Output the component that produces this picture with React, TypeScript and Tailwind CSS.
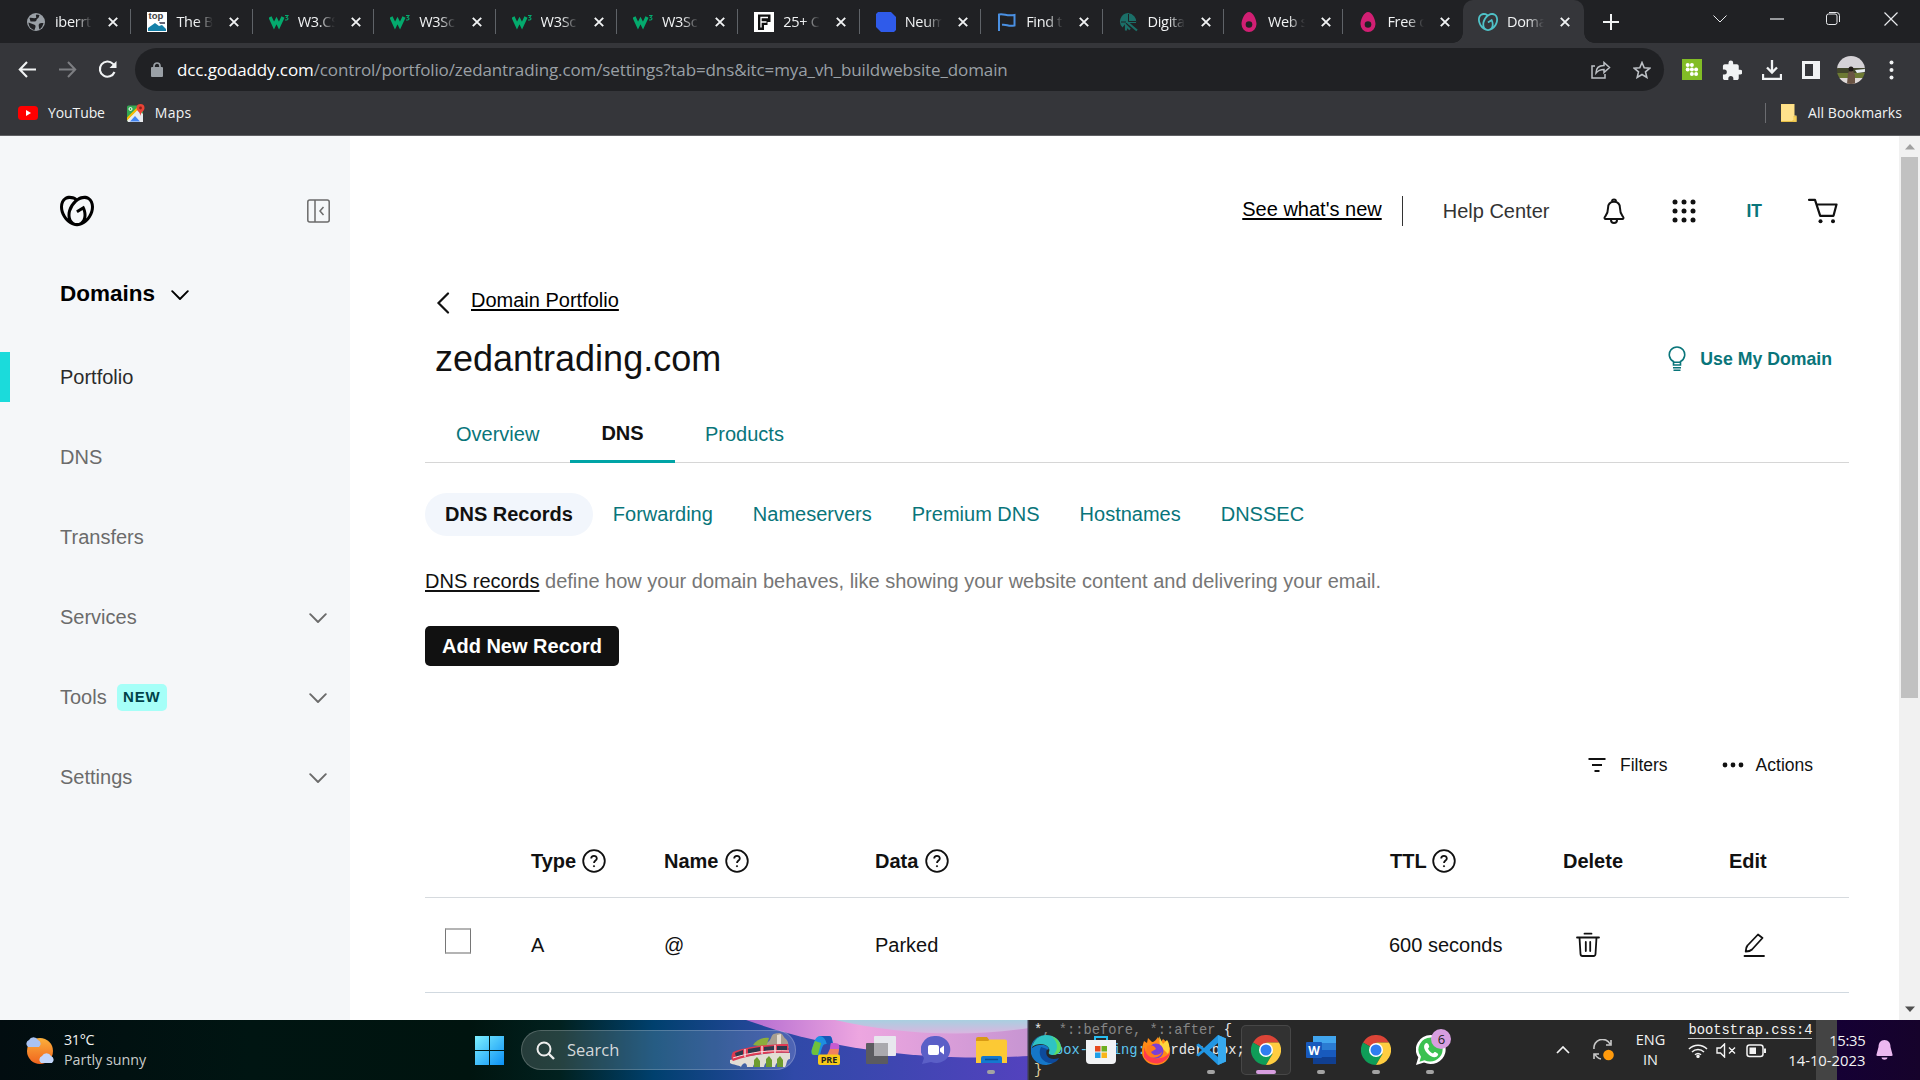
import React from "react";
import { SiGodaddy } from "react-icons/si";

const ui = "font-['Open_Sans','Noto_Sans',sans-serif]";

function Globe() {
  return (
    <svg width="20" height="20" viewBox="0 0 20 20">
      <circle cx="10" cy="10" r="9" fill="#9aa0a6" />
      <path d="M3.500 6c2-.5 4 .5 6.500 0 1-1-1-2.500.5-3.500l3 .5c-.5 2-1 3-2.500 4-1 1 0 2-2 2.500H4.500zM2.500 10.500l4 1.500c2 .5 3.500 1 3 3l-1 3C5 17.500 2.500 14 2.500 10.500zM13 16c0-2-1-3 .5-4.500 1-1 3-.5 4-.5-.3 2.500-2 5-4 6.500z" fill="#202124" />
    </svg>
  );
}
function TopSeo() {
  return (
    <svg width="20" height="20" viewBox="0 0 20 20">
      <rect width="20" height="20" fill="#fff" />
      <text x="1.500" y="7" fontSize="9.500" fontWeight="700" fontFamily="Liberation Sans" fill="#444">top</text>
      <path d="M1 19v-3l7-5 4 3 3-1 4 4v2z" fill="#1580a8" />
      <path d="M12 10h6v2h-5z" fill="#667" />
    </svg>
  );
}
function W3() {
  return (
    <svg width="20" height="20" viewBox="0 0 20 20">
      <path d="M1 5l4 8.500 2.500-5 2.500 5 4-8.500" fill="none" stroke="#04aa6d" strokeWidth="3.400" />
      <path d="M16 3.500h3l-1.500 2c2 0 2 2.500 0 2.500h-1.500" fill="none" stroke="#04aa6d" strokeWidth="1.100" />
    </svg>
  );
}
function FBox() {
  return (
    <svg width="20" height="20" viewBox="0 0 20 20">
      <rect width="20" height="20" fill="#fff" />
      <path d="M4 2.500h12.500v7.500h-3v3H10v5H4z" fill="#111" />
      <path d="M7 15.500V5.500h7M7.500 10h5" fill="none" stroke="#fff" strokeWidth="1.300" />
    </svg>
  );
}
function BlueShape() {
  return (
    <svg width="20" height="20" viewBox="0 0 20 20">
      <path d="M2 0h13l5 5v13l-2 2H5l-5-5V2z" fill="#2f5bea" />
    </svg>
  );
}
function Flag() {
  return (
    <svg width="20" height="20" viewBox="0 0 20 20">
      <path d="M2 19V2.500c6-1 7 2 15.500.5v10.500c-7 1.500-7-1.500-12.500-.7" fill="none" stroke="#4a90e2" strokeWidth="2" />
    </svg>
  );
}
function Circuit() {
  return (
    <svg width="20" height="20" viewBox="0 0 20 20">
      <path d="M9 1a8.500 8.500 0 0 0-5.500 14.500L7 11h10A8.500 8.500 0 0 0 9 1z" fill="#1b6f68" />
      <path d="M8 10l10 8.500M11 17.500L7 13.500v5" fill="none" stroke="#1b6f68" strokeWidth="2.200" />
      <path d="M9.500 2v7.500h7.500M2 10h5" fill="none" stroke="#202124" strokeWidth="1" />
    </svg>
  );
}
function Egg() {
  return (
    <svg width="20" height="20" viewBox="0 0 20 20">
      <path d="M10 0c4 0 7.500 7.500 7.500 12A7.500 8 0 0 1 2.500 12C2.500 7.500 6 0 10 0z" fill="#d11f73" />
      <circle cx="10" cy="12.500" r="3.300" fill="#202124" />
    </svg>
  );
}

const tabs: { icon: React.ReactNode; t: string }[] = [
  { icon: <Globe />, t: "iberrt" },
  { icon: <TopSeo />, t: "The B" },
  { icon: <W3 />, t: "W3.CS" },
  { icon: <W3 />, t: "W3Sc" },
  { icon: <W3 />, t: "W3Sc" },
  { icon: <W3 />, t: "W3Sc" },
  { icon: <FBox />, t: "25+ C" },
  { icon: <BlueShape />, t: "Neum" },
  { icon: <Flag />, t: "Find t" },
  { icon: <Circuit />, t: "Digita" },
  { icon: <Egg />, t: "Web s" },
  { icon: <Egg />, t: "Free o" },
  { icon: <SiGodaddy size={20} color="#4fc3c9" />, t: "Doma" },
];

function CloseX() {
  return (
    <svg width="10" height="10" viewBox="0 0 10 10" className="shrink-0">
      <path d="M.8.8l8.400 8.400M9.200.8L.8 9.200" stroke="#f1f3f4" strokeWidth="1.900" />
    </svg>
  );
}

function TabStrip() {
  return (
    <div className="flex h-[43px] bg-[#202124] pl-[10px]">
      {tabs.map((tab, i) => {
        const active = i === tabs.length - 1;
        return (
          <div
            key={i}
            className={
              "relative flex h-[43px] shrink-0 items-center " +
              (i < 10 ? "w-[121.400px] pl-[16px] " : "pl-[15px] ") +
              (i >= 10 && !active ? "w-[119.500px] " : "") +
              (active ? "w-[121px] rounded-t-[10px] bg-[#35363a]" : "")
            }
          >
            {active && (
              <>
                <div className="absolute -left-[10px] bottom-0 h-[10px] w-[10px] bg-[radial-gradient(circle_at_0_0,#202124_9.500px,#35363a_10px)]" />
                <div className="absolute -right-[10px] bottom-0 h-[10px] w-[10px] bg-[radial-gradient(circle_at_100%_0,#202124_9.500px,#35363a_10px)]" />
              </>
            )}
            <span className="flex w-5 shrink-0 justify-center">{tab.icon}</span>
            <span className="ml-[9px] mr-[16px] w-[37px] shrink-0 overflow-hidden whitespace-nowrap text-[14.500px] leading-5 tracking-[-0.3px] text-[#f1f3f4] [mask-image:linear-gradient(to_right,black_55%,transparent_100%)]">
              {tab.t}
            </span>
            <CloseX />
            {i < 11 && <span className="absolute right-0 top-[9px] h-[25px] w-px bg-[#5f6368]" />}
          </div>
        );
      })}
      <div className="flex flex-1 items-center pl-[19px]">
        <svg width="16" height="16" viewBox="0 0 16 16"><path d="M8 0v16M0 8h16" stroke="#f1f3f4" strokeWidth="2" /></svg>
      </div>
      <div className="flex h-[37px] items-center text-[#e8eaed]">
        <svg className="mr-[43px]" width="14" height="8" viewBox="0 0 14 8"><path d="M.5.500L7 7 13.500.500" fill="none" stroke="currentColor" /></svg>
        <svg className="mr-[42px]" width="14" height="2" viewBox="0 0 14 2"><path d="M0 1h14" stroke="currentColor" strokeWidth="1.200" /></svg>
        <svg className="mr-[44px]" width="14" height="13" viewBox="0 0 14 13"><rect x=".5" y="2" width="10.500" height="10.500" rx="2" fill="none" stroke="currentColor" /><path d="M3 .5h7.500a3 3 0 0 1 3 3V10" fill="none" stroke="currentColor" /></svg>
        <svg className="mr-[22px]" width="14" height="14" viewBox="0 0 14 14"><path d="M.5.500l13 13M13.500.500l-13 13" stroke="currentColor" strokeWidth="1.200" /></svg>
      </div>
    </div>
  );
}

function Toolbar() {
  return (
    <div className="flex h-[53px] items-center bg-[#35363a] text-[#f1f3f4]">
      <svg className="ml-[18px]" width="19" height="17" viewBox="0 0 19 17"><path d="M9 1L1.800 8.500 9 16M2 8.500h16" fill="none" stroke="currentColor" strokeWidth="2.100" /></svg>
      <svg className="ml-[22px] text-[#7d7e82]" width="18" height="17" viewBox="0 0 18 17"><path d="M9 1l7.200 7.500L9 16M16 8.500H0" fill="none" stroke="currentColor" strokeWidth="2" /></svg>
      <svg className="ml-[21px]" width="20" height="19" viewBox="0 0 20 19"><path d="M16.500 12A7.600 7.600 0 1 1 15 3.900l2 2.300" fill="none" stroke="currentColor" strokeWidth="2.100" /><path d="M18.500 1v7h-7z" fill="currentColor" /></svg>
      <div className="ml-[17px] flex h-[43px] w-[1529px] items-center rounded-full bg-[#202124]">
        <svg className="ml-[16px]" width="12" height="15" viewBox="0 0 12 15"><rect y="5" width="12" height="10" rx="1" fill="#9aa0a6" /><path d="M3 6V4a3 3 0 0 1 6 0v2" fill="none" stroke="#9aa0a6" strokeWidth="1.700" /></svg>
        <span className="ml-[14px] flex-1 whitespace-nowrap text-[17px] tracking-[-0.115px] text-[#9aa0a6]">
          <span className="text-white">dcc.godaddy.com</span>/control/portfolio/zedantrading.com/settings?tab=dns&amp;itc=mya_vh_buildwebsite_domain
        </span>
        <svg className="mr-[22px]" width="20" height="18" viewBox="0 0 20 18"><path d="M4 5H1v12h13v-4M5 12c0-5 3-7.500 8-7.500V1.500l5.500 5L13 11.500V8.500c-4 0-6 1-8 3.500z" fill="none" stroke="#bdc1c6" strokeWidth="1.500" /></svg>
        <svg className="mr-[13px]" width="18" height="18" viewBox="0 0 18 18"><path d="M9 1.500l2.200 5.200 5.600.5-4.300 3.700 1.300 5.500L9 13.500l-4.800 2.900 1.300-5.500L1.200 7.200l5.600-.5z" fill="none" stroke="#bdc1c6" strokeWidth="1.600" /></svg>
      </div>
      <svg className="ml-[18px]" width="20" height="21" viewBox="0 0 20 21"><rect width="20" height="21" fill="#82bd26" /><g fill="#fff"><circle cx="5.700" cy="6" r="2" /><circle cx="9.900" cy="6" r="2" /><circle cx="5.700" cy="10.500" r="2" /><circle cx="9.900" cy="10.500" r="2" /><circle cx="14.100" cy="10.500" r="2" /><circle cx="9.900" cy="15" r="2" /><circle cx="14.100" cy="15" r="2" /></g></svg>
      <svg className="ml-[20px]" width="20" height="20" viewBox="1.500 0.500 20.500 21.500"><path fill="currentColor" d="M20.500 11H19V7c0-1.100-.9-2-2-2h-4V3.500a2.500 2.500 0 0 0-5 0V5H4c-1.100 0-2 .9-2 2v3.800h1.500a2.700 2.700 0 0 1 0 5.400H2V20c0 1.100.9 2 2 2h3.800v-1.500a2.700 2.700 0 0 1 5.400 0V22H17c1.100 0 2-.9 2-2v-4h1.500a2.500 2.500 0 0 0 0-5z" /></svg>
      <svg className="ml-[20px]" width="20" height="20" viewBox="0 0 20 20"><path d="M10 0v12M5 7.500l5 5 5-5M1 14v5h18v-5" fill="none" stroke="currentColor" strokeWidth="2.300" /></svg>
      <svg className="ml-[20px]" width="18" height="18" viewBox="0 0 18 18"><path fill="currentColor" fillRule="evenodd" d="M0 0h18v18H0zM3 3v12h8V3z" /></svg>
      <svg className="ml-[17px]" width="28" height="28" viewBox="0 0 28 28">
        <clipPath id="avatar"><circle cx="14" cy="14" r="14" /></clipPath>
        <g clipPath="url(#avatar)">
          <rect width="28" height="13" fill="#d5d2d6" /><rect y="12" width="28" height="5" fill="#42462c" /><rect y="17" width="28" height="5" fill="#6d7a34" /><rect y="22" width="28" height="6" fill="#dfd9d8" />
          <path d="M10 28l1-11 2-2h3l2 4v9z" fill="#6a5444" /><circle cx="14" cy="13" r="2.500" fill="#201a18" /><path d="M18 14l10-1v3l-8 1z" fill="#e8eef2" />
        </g>
      </svg>
      <svg className="ml-[24px]" width="5" height="20" viewBox="0 0 5 20"><g fill="currentColor"><circle cx="2.500" cy="2.500" r="2" /><circle cx="2.500" cy="10" r="2" /><circle cx="2.500" cy="17.500" r="2" /></g></svg>
    </div>
  );
}

function Bookmarks() {
  return (
    <div className="flex h-[40px] items-center border-b border-[#5f6063] bg-[#35363a] pb-[6px] text-[14px] text-[#f1f3f4]">
      <svg className="ml-[18px]" width="20" height="14" viewBox="0 0 20 14"><rect width="20" height="14" rx="3.500" fill="#f00" /><path d="M8 4l5 3-5 3z" fill="#fff" /></svg>
      <span className="ml-[10px] tracking-[-0.1px]">YouTube</span>
      <svg className="ml-[22px]" width="18" height="18" viewBox="0 0 18 18">
        <rect y="1.500" width="16" height="16" rx="1.500" fill="#34a853" /><path d="M0 16L11 5l5 5v8H1z" fill="#e8eaed" /><path d="M3 17.500l5-5.500 5 5.500z" fill="#4285f4" /><path d="M0 13.500v3L12 4.500l-1.500-1.500z" fill="#fbbc04" />
        <path d="M13.500 0A4 4 0 0 1 17.500 4c0 3-3.500 3.500-4 8-.5-4.500-4-5-4-8a4 4 0 0 1 4-4z" fill="#ea4335" /><circle cx="13.500" cy="4" r="1.400" fill="#8c1f18" /><circle cx="3.500" cy="5" r="1.500" fill="none" stroke="#fff" />
      </svg>
      <span className="ml-[10px] flex-1 tracking-[0.200px]">Maps</span>
      <span className="h-5 w-px bg-[#6b6c70]" />
      <svg className="ml-[15px]" width="16" height="18" viewBox="0 0 16 18"><path d="M0 0h13.500v11.500H15.500V18H0z" fill="#ffe082" /><path d="M0 17.500h12v-5h3.200v5H0z" fill="#f7d25b" stroke="#e3b93b" strokeWidth=".6" /><path d="M1 1h11.500v15H1z" fill="#ffe28c" /></svg>
      <span className="ml-[11px] mr-[18px] whitespace-nowrap tracking-[0.050px]">All Bookmarks</span>
    </div>
  );
}

function Chevron({ className }: { className: string }) {
  return (
    <svg className={className} width="18" height="11" viewBox="0 0 18 11"><path d="M1.200 1.200L9 9l7.800-7.800" fill="none" stroke="currentColor" strokeWidth="1.900" strokeLinecap="round" strokeLinejoin="round" /></svg>
  );
}

const nav = [
  { t: "Portfolio", active: true },
  { t: "DNS" },
  { t: "Transfers" },
  { t: "Services", more: true },
  { t: "Tools", more: true, badge: true },
  { t: "Settings", more: true },
];

function Sidebar() {
  return (
    <aside className="flex w-[350px] shrink-0 flex-col bg-[#f5f7f9]">
      <div className="mt-[57px] flex h-[36px] items-center justify-between pl-[60px] pr-[20px]">
        <SiGodaddy size={34} color="#000" />
        <svg width="23" height="24" viewBox="0 0 23 24" fill="none" stroke="#6b6b6b" strokeWidth="1.500"><rect x=".8" y="1" width="21.400" height="22" rx="2" /><path d="M8 1v22M16.500 8L13 12l3.500 4" /></svg>
      </div>
      <div className="mt-[47px] flex h-[36px] items-center pl-[60px] text-[22.500px] font-bold text-black">
        Domains <Chevron className="ml-[16px] mt-[2px]" />
      </div>
      <nav className="mt-[25px]">
        {nav.map((n) => (
          <div key={n.t} className={"flex h-[80px] items-center text-[20px] " + (n.active ? "text-[#2b2b2b]" : "text-[#6b6b6b]")}>
            <span className={"h-[50px] w-[10px] " + (n.active ? "bg-[#1bdbdb]" : "")} />
            <span className="ml-[50px]">{n.t}</span>
            {n.badge && (
              <span className="ml-[10px] flex h-[27px] w-[50px] items-center justify-center rounded-[5px] bg-[#a6fff8] text-[15px] font-bold tracking-[0.8px] text-[#004249]">NEW</span>
            )}
            {n.more && <Chevron className="ml-auto mr-[23px] mt-[2px]" />}
          </div>
        ))}
      </nav>
    </aside>
  );
}

function Help() {
  return (
    <svg width="24" height="24" viewBox="0 0 24 24" fill="none" stroke="#111" strokeWidth="1.800">
      <circle cx="12" cy="12" r="10.800" /><path d="M9.200 9.600c0-3.600 5.600-3.500 5.600-.2 0 2.200-2.800 2-2.800 4.600" /><circle cx="12" cy="17.200" r=".6" fill="#111" strokeWidth="1" />
    </svg>
  );
}

function Header() {
  return (
    <div className="flex h-[36px] items-center justify-end">
      <span className="-mt-[4px] text-black underline decoration-2 underline-offset-[2px]">See what's new</span>
      <span className="ml-[20px] h-[30px] w-px bg-[#333]" />
      <span className="ml-[40px] text-[#333]">Help Center</span>
      <svg className="ml-[54px]" width="22" height="26" viewBox="0 0 22 26" fill="none" stroke="#111" strokeWidth="2"><path d="M11 3.800c-4.200 0-6 3-6 6.500 0 5.500-1.500 6.500-3.200 8.700-.8 1 0 2 .7 2h17c.7 0 1.500-1 .7-2-1.700-2.200-3.200-3.200-3.200-8.700 0-3.500-1.800-6.500-6-6.500z" strokeLinejoin="round" /><path d="M9 3.500a2 2 0 1 1 4 0M8 22a3 3 0 0 0 6 0" /></svg>
      <svg className="ml-[47px]" width="24" height="24" viewBox="0 0 24 24" fill="#111">
        {[3, 12, 21].map((y) => [3, 12, 21].map((x) => <circle key={x + "-" + y} cx={x} cy={y} r="2.500" />))}
      </svg>
      <span className="ml-[50px] text-[17.500px] font-bold text-[#09757a]">IT</span>
      <svg className="ml-[46px] mr-[11px]" width="30" height="26" viewBox="0 0 30 26" fill="none" stroke="#111" strokeWidth="2.200"><path d="M1 1.800h6l5.200 16h13.300L28.500 6.500H8.500" strokeLinejoin="round" strokeLinecap="round" /><circle cx="12.500" cy="23.300" r="2" fill="#111" stroke="none" /><circle cx="25" cy="23.300" r="2" fill="#111" stroke="none" /></svg>
    </div>
  );
}

const cols = "grid grid-cols-[106px_133px_211px_514px_174px_166px_120px]";

function Main() {
  return (
    <main className="flex flex-1 flex-col overflow-hidden bg-white pl-[75px] pr-[50px] pt-[57px] text-[20px] text-[#111]">
      <Header />
      <div className="mt-[54px] flex h-[36px] items-center">
        <svg className="ml-[11px] mt-[4px]" width="14" height="22" viewBox="0 0 14 22"><path d="M12 1.500L2.500 11 12 20.500" fill="none" stroke="#111" strokeWidth="2.200" strokeLinecap="round" /></svg>
        <span className="-mt-[2px] ml-[21px] text-black underline decoration-2 underline-offset-[2px]">Domain Portfolio</span>
      </div>
      <div className="mt-[17px] flex h-[46px] items-center justify-between pl-[10px] pr-[17px]">
        <h1 className="text-[36px] leading-[46px]">zedantrading.com</h1>
        <div className="flex items-center text-[17.700px] font-bold text-[#09757a]">
          <svg className="mr-[14px]" width="18" height="25" viewBox="0 0 18 25" fill="none" stroke="currentColor" strokeWidth="1.600"><path d="M5.500 15.500A7.700 7.700 0 1 1 12.500 15.500V19h-7zM5.500 16.300h7M5 21.800h8M5.500 24.200h7" /></svg>
          Use My Domain
        </div>
      </div>
      <div className="mt-[30px] flex h-[51px] border-b border-[#d6d6d6] text-[#09757a]">
        <span className="flex w-[145px] pl-[31px] pt-[7px]">Overview</span>
        <span className="-mb-px flex w-[105px] justify-center border-b-3 border-[#00a4a6] pt-[6px] font-bold text-[#111]">DNS</span>
        <span className="pl-[30px] pt-[7px]">Products</span>
      </div>
      <div className="mt-[30px] flex h-[43px] items-center gap-[40px] pb-px text-[#09757a]">
        <span className="-mb-px -mr-[20px] flex h-[43px] items-center rounded-full bg-[#f2f6fc] px-[20px] pb-px font-bold text-[#111]">DNS Records</span>
        <span>Forwarding</span>
        <span>Nameservers</span>
        <span>Premium DNS</span>
        <span>Hostnames</span>
        <span>DNSSEC</span>
      </div>
      <p className="mt-[30px] h-[30px] whitespace-nowrap leading-[30px] text-[#767676]">
        <span className="text-[#111] underline decoration-2 underline-offset-[2px]">DNS records</span> define how your domain behaves, like showing your website content and delivering your email.
      </p>
      <button className="mt-[30px] h-[40px] w-[194px] rounded-[5px] bg-[#111] font-bold text-white">Add New Record</button>
      <div className="mt-[84px] flex h-[30px] items-center justify-end pr-[36px] text-[17.500px]">
        <svg className="mr-[14px]" width="18" height="16" viewBox="0 0 18 16"><path d="M.5 2h17M4 8h10M6.500 14h5" stroke="#111" strokeWidth="1.800" /></svg>
        Filters
        <svg className="ml-[54px] mr-[12px]" width="22" height="6" viewBox="0 0 22 6" fill="#111"><circle cx="3" cy="3" r="2.400" /><circle cx="11" cy="3" r="2.400" /><circle cx="19" cy="3" r="2.400" /></svg>
        Actions
      </div>
      <div className={cols + " mt-[46px] h-[72px] items-center border-b border-[#d6dade] pb-[2px] font-bold"}>
        <span />
        <span className="flex items-center gap-[6px]">Type <Help /></span>
        <span className="flex items-center gap-[7px]">Name <Help /></span>
        <span className="flex items-center gap-[7px]">Data <Help /></span>
        <span className="flex items-center gap-[5px] pl-[1px]">TTL <Help /></span>
        <span>Delete</span>
        <span>Edit</span>
      </div>
      <div className={cols + " h-[95px] items-center border-b border-[#d1d9e0]"}>
        <span className="-mt-[8px] ml-[20px] h-[26px] w-[26px] border-x border-y-2 border-x-[#767676] border-y-[#b4b4b4]" />
        <span>A</span>
        <span>@</span>
        <span>Parked</span>
        <span>600 seconds</span>
        <svg className="ml-[13px]" width="24" height="26" viewBox="0 0 24 26" fill="none" stroke="#111" strokeWidth="1.800"><path d="M8.500 1.700h7M1 5.500h22M3.500 5.500l1 16.500c.1 1.300.8 2 2 2h11c1.200 0 1.900-.7 2-2l1-16.500M9.800 10v9M14.200 10v9" strokeLinecap="round" /></svg>
        <svg className="ml-[14px]" width="22" height="26" viewBox="0 0 22 26" fill="none" stroke="#111" strokeWidth="1.800"><path d="M15 2.500l4.500 3.500L9 17.500c-1.500 1.500-3.500 2-6.300 2 .2-2.500.3-4.500 1.800-6zM1.500 24h19.500" strokeLinecap="round" strokeLinejoin="round" /></svg>
      </div>
    </main>
  );
}

function Chrome() {
  return (
    <svg width="30" height="30" viewBox="0 0 30 30">
      <path d="M15 15L2 7.500A15 15 0 0 1 28 7.500H15z" fill="#db4437" />
      <path d="M15 15L2 7.500A15 15 0 0 0 15 30l6.500-11z" fill="#0f9d58" />
      <path d="M15 7.500h13A15 15 0 0 1 15 30l6.500-11z" fill="#ffcd40" />
      <circle cx="15" cy="15" r="7" fill="#fff" /><circle cx="15" cy="15" r="5.500" fill="#2f7df0" />
    </svg>
  );
}

const apps: { icon: React.ReactNode; dot?: boolean; active?: boolean; count?: string }[] = [
  {
    icon: (
      <svg width="30" height="30" viewBox="0 0 30 30">
        <path d="M9 1h9c3 0 3 3 4 8h-7c-3 0-4 3-6 11H3c-3 0-3-3-2-6C3 6 5 1 9 1z" fill="#1d8fe0" /><path d="M1 14c1-3 2-6 3-8l6 2-3 12H3c-2 0-3-3-2-6z" fill="#70c13c" />
        <path d="M9 1h9c3 0 3 3 4 8l-6 1c-1-4-2-8-7-9z" fill="#1757b8" />
        <path d="M20 8h4c4 0 5 3 4 6l-2 8h-9c2-2 2-14 3-14z" fill="#c65bd0" /><path d="M16 20l3-6h9l-1 7z" fill="#f08060" />
        <rect x="7" y="19.500" width="22" height="10.500" rx="2" fill="#f8ca17" />
        <text x="18" y="28.300" textAnchor="middle" fontSize="9" fontWeight="700" fontFamily="Open Sans" fill="#222">PRE</text>
      </svg>
    ),
  },
  { icon: <svg width="30" height="30" viewBox="0 0 30 30"><rect y="8" width="22" height="21" rx="1" fill="#5b5b60" /><rect x="8" y="1" width="22" height="20" rx="1" fill="#e8e8ee" /><rect x="8" y="8" width="14" height="13" fill="#aaa9ae" /></svg> },
  { icon: <svg width="30" height="30" viewBox="0 0 30 30"><path d="M15 1a14 13.500 0 1 1-5 26l-9 2 2-6A14 13.500 0 0 1 15 1z" fill="#5b5fc7" /><rect x="7" y="10" width="11" height="10" rx="2" fill="#fff" /><path d="M19 13.500l4-3v9l-4-3z" fill="#fff" /></svg> },
  { dot: true, icon: <svg width="31" height="30" viewBox="0 0 31 30"><path d="M0 4a2 2 0 0 1 2-2h9l3 4h-14z" fill="#d99a14" /><path d="M0 6h12l2-1.500h15a2 2 0 0 1 2 2V28H0z" fill="#fcc934" /><path d="M5 28v-5a2 2 0 0 1 2-2h17a2 2 0 0 1 2 2v5z" fill="#1479cf" /><path d="M9 24.500h13" stroke="#0c4f91" strokeWidth="1.500" /></svg> },
  { icon: <svg width="30" height="30" viewBox="0 0 30 30"><path d="M15 0a15 15 0 1 0 7 28C10 28 9 16 18 14c-2-5-10-6-17-1C2 5 8 0 15 0z" fill="#1577c8" /><path d="M1 12C3 4 9 0 15 0c9 0 15 6 15 12 0 5-4 8-8 8-3 0-5-1-4-3 2-4-3-8-8-8-4 0-7 1-9 3z" fill="#2fc3c4" /><path d="M20 1c6 2 10 7 10 12 0 4-4 7-8 7 7-6 4-15-2-19z" fill="#5fdc62" /><path d="M10 12c-4 8 2 17 12 16 3-1 5-3 6-5-8 3-15-1-12-9z" fill="#0d4a9c" /></svg> },
  { icon: <svg width="30" height="30" viewBox="0 0 30 30"><path d="M9 7V2h12v5" fill="none" stroke="#27bdf0" strokeWidth="2" /><path d="M0 5h30v20a4 4 0 0 1-4 4H4a4 4 0 0 1-4-4z" fill="#f2f3f5" /><rect x="9" y="11" width="5.500" height="5.500" fill="#e64a1f" /><rect x="15.500" y="11" width="5.500" height="5.500" fill="#6cae1e" /><rect x="9" y="17.500" width="5.500" height="5.500" fill="#1f9fe8" /><rect x="15.500" y="17.500" width="5.500" height="5.500" fill="#f8b51a" /></svg> },
  { icon: <svg width="29" height="30" viewBox="0 0 29 30"><path d="M2 6l3 2 1-5 4 4c2 0 4-2 6-5l3 5 2-3c5 4 7 8 7 13a14 13 0 0 1-28 0C0 12 1 9 2 6z" fill="#ff8a16" /><path d="M2 12a14 13 0 0 0 26 5 14 13 0 0 1-26 5z" fill="#ff3b4e" /><path d="M17 1l4 8 4-4c3 4 3 10 1 14l-8-8z" fill="#ffd43b" /><circle cx="14" cy="16" r="7.500" fill="#7a3fd6" /><path d="M5 11c4-2 8 0 9 3l-5 3c3 5 8 3 11 0-1 6-13 9-16 0z" fill="#ff7a1c" /></svg> },
  { dot: true, icon: <svg width="30" height="30" viewBox="0 0 30 30"><path d="M22 0l8 3.500v23L22 30 8 17l-5.500 4.500L0 20l6-5-6-5 2.500-1.500L8 13zM22 8l-8.500 7L22 22z" fill="#2196e3" fillRule="evenodd" /><path d="M22 0l8 3.500v23L22 30z" fill="#37a9ee" /></svg> },
  { active: true, icon: <Chrome /> },
  { dot: true, icon: <svg width="30" height="28" viewBox="0 0 30 28"><rect x="7" width="23" height="7" fill="#41a5ee" /><rect x="7" y="7" width="23" height="7" fill="#2b7cd3" /><rect x="7" y="14" width="23" height="7" fill="#185abd" /><rect x="7" y="21" width="23" height="7" fill="#103f91" /><rect y="6" width="16" height="16" rx="1" fill="#185abd" /><text x="8" y="18.500" textAnchor="middle" fontSize="12" fontWeight="700" fontFamily="Open Sans" fill="#fff">W</text></svg> },
  { dot: true, icon: <Chrome /> },
  { dot: true, count: "6", icon: <svg width="30" height="30" viewBox="0 0 30 30"><path d="M15 0a15 14.500 0 1 1-7 27.500L0 30l2.300-7.700A15 14.500 0 0 1 15 0z" fill="#fff" /><path d="M15 2.500a12.500 12 0 1 1-6.500 22.700l-5 1.500 1.500-5A12.500 12 0 0 1 15 2.500z" fill="#3bc151" /><path d="M10 8c-4 3-1 8 2 11s8 5 10 1c1-1-2-3-3.500-3L17 18.500c-2-.5-4.500-3-5-5l1.300-1.500C13 10 12 7.500 10 8z" fill="#fff" /></svg> },
];

function Taskbar() {
  return (
    <footer className="relative flex h-[60px] overflow-hidden bg-[linear-gradient(90deg,#020d10_0,#001512_250px,#00140f_470px,#01211f_560px,#003052_640px,#10509a_720px)] text-[#f3f3f3]">
      <svg className="absolute left-[560px] top-0" width="469" height="60" viewBox="0 0 469 60">
        <defs>
          <linearGradient id="sky"><stop offset="0" stopColor="#01211f" /><stop offset=".2" stopColor="#00406e" /><stop offset=".5" stopColor="#3049a8" /><stop offset="1" stopColor="#5342be" /></linearGradient>
          <linearGradient id="rim"><stop offset="0" stopColor="#b26ad0" /><stop offset=".4" stopColor="#eda6e0" /><stop offset="1" stopColor="#c795d2" /></linearGradient>
          <linearGradient id="haze" x2="0" y2="1"><stop stopColor="#a9cfe0" /><stop offset="1" stopColor="#d9b6e0" /></linearGradient>
        </defs>
        <rect width="469" height="60" fill="url(#sky)" />
        <path d="M186 0C270 30 370 42 469 36V0z" fill="url(#rim)" />
        <path d="M275 0c60 14 130 18 194 8V0z" fill="url(#haze)" />
        <rect x="467.500" width="1.500" height="60" fill="#3b3b4a" />
      </svg>
      <div className="absolute left-[1029px] top-0 flex h-[60px] w-[891px] overflow-hidden bg-[#282828]">
        <pre className="pl-[5px] pt-[1px] font-['Liberation_Mono',monospace] text-[13.750px] leading-[20px] text-[#858585]"><span className="text-[#e8e8e8]">*</span>{", *::before, *::after "}<span className="text-[#e8e8e8]">{"{"}</span>{"\n"}<span className="inline-block pl-[21px] text-[#5cc6f0]">box-sizing:<span className="text-[#e8e8e8]"> border-box;</span></span>{"\n"}<span className="text-[#e0d3a0]">{"}"}</span></pre>
        <span className="ml-auto h-[60px] w-[21px] bg-[#444]" />
        <span className="h-[60px] w-[83px] bg-[linear-gradient(90deg,#150034,#16032b)]" />
      </div>

      <div className="relative flex w-full items-center">
        <svg className="ml-[25px]" width="31" height="30" viewBox="0 0 31 30"><defs><linearGradient id="sun" x2="0" y2="1"><stop stopColor="#fbb03b" /><stop offset="1" stopColor="#f0641e" /></linearGradient></defs><circle cx="15" cy="16" r="13" fill="url(#sun)" /><path d="M3 12a4 4 0 0 1 1-7 5 5 0 0 1 9 0 4 4 0 0 1 1 7z" fill="#a9c3f2" /><path d="M16 28a4 4 0 0 1 1-7 5 5 0 0 1 9 0 4 4 0 0 1 1 7z" fill="#c3d6fa" /></svg>
        <div className="-mt-px ml-[8px] w-[411px] text-[14.300px] leading-[20px]"><div className="tracking-[-0.300px]">31°C</div><div className="text-[#c9cccb]">Partly sunny</div></div>
        <svg width="29" height="29" viewBox="0 0 29 29"><defs><linearGradient id="win" x2="1" y2="1"><stop stopColor="#7df0ff" /><stop offset="1" stopColor="#0b90f5" /></linearGradient></defs><path d="M0 0h14v14H0zM15 0h14v14H15zM0 15h14v14H0zM15 15h14v14H15z" fill="url(#win)" /></svg>
        <div className="ml-[17px] flex h-[40px] w-[275px] items-center rounded-full border border-white/20 bg-white/15">
          <svg className="ml-[14px]" width="19" height="19" viewBox="0 0 19 19"><circle cx="8" cy="8" r="6.500" fill="none" stroke="#eee" strokeWidth="2" /><path d="M12.500 12.500l5.500 5.500" stroke="#eee" strokeWidth="2.400" /></svg>
          <span className="ml-[12px] mt-px text-[16.500px] text-[#d4d8da]">Search</span>
          <svg className="ml-auto mr-[4px]" width="62" height="34" viewBox="0 0 62 34">
            <path d="M34 14c4-6 6-4 8-9 2-6 5-4 8-5 4 0 4 4 7 6 3 3 2 6 3 9z" fill="#a99f90" /><path d="M24 12c4-6 10-8 16-7l-3 9z" fill="#8cae3c" /><path d="M48 2l4-1v12h-4z" fill="#e5dcd2" />
            <path d="M1 27c15-4 40-8 60-7v6c-4 0-3 6-5 8h-5c0-6-4-6-5 0h-6c0-6-4-6-5 0h-6c0-6-4-5-5 0h-6c0-5-4-5-6 0C10 32 4 32 1 30z" fill="#e2ded4" />
            <path d="M25 34v-7l3-3 3 4v6zM37 34v-8l3-3 3 4v7zM48 34v-8l3-3 3 4v7z" fill="#6d9c2f" />
            <path d="M4 19c10-4 30-8 55-8l1 9c-20-1-38 2-56 8-2-2-2-6 0-9z" fill="#e03a52" /><path d="M6 20l8-3v5l-7 2zM19 16l12-2v4l-12 3zM35 14l10-1v4l-10 1zM48 13h10v4H48z" fill="#2f3a4c" /><path d="M4 25c18-6 36-8 56-7" fill="none" stroke="#f5d9dc" strokeWidth="1" /><path d="M16 16v8M33 13v8M46 12v8" stroke="#f5e9e9" strokeWidth="1.300" />
          </svg>
        </div>
        <div className="ml-[3px] flex h-full">
          {apps.map((a, i) => (
            <div key={i} className="relative flex h-[60px] w-[54.960px] items-center justify-center">
              {a.active && <span className="absolute left-[2px] top-[5px] h-[50px] w-[50px] rounded-[5px] border border-white/10 bg-white/5" />}
              <span className="relative">{a.icon}</span>
              {a.dot && <span className="absolute bottom-[6px] left-[23px] h-[4px] w-[8px] rounded-full bg-[#a3a3a3]" />}
              {a.active && <span className="absolute bottom-[6px] left-[17px] h-[4px] w-[20px] rounded-full bg-[#d79ee0]" />}
              {a.count && <span className="absolute left-[28px] top-[9px] flex h-[20px] w-[20px] items-center justify-center rounded-full bg-[#d79ee0] text-[13px] leading-none text-[#222]">{a.count}</span>}
            </div>
          ))}
        </div>
        <svg className="ml-[98px]" width="14" height="8" viewBox="0 0 14 8"><path d="M1 7l6-6 6 6" fill="none" stroke="currentColor" strokeWidth="1.700" /></svg>
        <svg className="ml-[23px]" width="22" height="22" viewBox="0 0 22 22"><path d="M1 10a8.500 8.500 0 0 1 16-5M18 1v5h-5M8 20a8.500 8.500 0 0 1-6-5M1 20v-5h5" fill="none" stroke="#c8c8c8" strokeWidth="1.600" /><circle cx="15.500" cy="16" r="5.300" fill="#ff9a0c" /></svg>
        <div className="ml-[15px] w-[40px] text-center text-[14.500px] leading-[20px]"><div>ENG</div><div>IN</div></div>
        <div className="ml-[18px] flex h-full w-[125px] flex-col">
          <span className="mt-[3px] w-[124px] whitespace-nowrap border-b border-[#c8c8c8] font-['Liberation_Mono',monospace] text-[13.800px] leading-[15px]">bootstrap.css:4</span>
          <div className="mt-[4px] flex items-center">
            <svg width="20" height="15" viewBox="0 0 20 15" fill="none" stroke="currentColor" strokeWidth="1.500"><path d="M1 6a12.500 12.500 0 0 1 18 0M4 9a8.500 8.500 0 0 1 12 0M7 11.800a4.500 4.500 0 0 1 6 0" /><circle cx="10" cy="13.300" r="1" fill="currentColor" /></svg>
            <svg className="ml-[8px]" width="20" height="15" viewBox="0 0 20 15" fill="none" stroke="currentColor" strokeWidth="1.400"><path d="M1 5h3.500l4-4v13l-4-4H1zM13 4.500l6 6M19 4.500l-6 6" /></svg>
            <svg className="ml-[10px]" width="21" height="14" viewBox="0 0 21 14"><rect x="1" y="1" width="16" height="11.500" rx="2.500" fill="none" stroke="currentColor" strokeWidth="1.500" /><rect x="3.500" y="3.500" width="6.500" height="6.500" fill="currentColor" /><path d="M19 4.500v4.500" stroke="currentColor" strokeWidth="2" /></svg>
          </div>
        </div>
        <div className="-ml-[29px] w-[81px] text-right text-[14.800px] leading-[20px]"><div className="tracking-[-0.300px]">15:35</div><div className="whitespace-nowrap">14-10-2023</div></div>
        <svg className="ml-[11px]" width="17" height="20" viewBox="0 0 17 20"><path d="M8.500 0c-4 0-6 3-6 7L.5 14.500C.3 15.500.5 16 1.500 16h14c1 0 1.200-.5 1-1.500L14.500 7c0-4-2-7-6-7zM5.500 17.500h6c-.5 3-5.500 3-6 0z" fill="#ecb8f0" /></svg>
      </div>
    </footer>
  );
}

export default function App() {
  return (
    <div className={"flex h-[1080px] w-[1920px] flex-col overflow-hidden " + ui}>
      <TabStrip />
      <Toolbar />
      <Bookmarks />
      <div className="flex h-[884px] font-['Liberation_Sans',Arial,sans-serif]">
        <Sidebar />
        <Main />
        <div className="flex w-[21px] flex-col items-center bg-[#f1f1f1]">
          <svg className="h-[21px] py-[7px]" width="10" viewBox="0 0 10 6"><path d="M0 6l5-5.500L10 6z" fill="#a0a0a0" /></svg>
          <div className="h-[541px] w-[17px] bg-[#c1c1c1]" />
          <svg className="mt-auto h-[21px] py-[7px]" width="10" viewBox="0 0 10 6"><path d="M0 0l5 5.500L10 0z" fill="#505050" /></svg>
        </div>
      </div>
      <Taskbar />
    </div>
  );
}
